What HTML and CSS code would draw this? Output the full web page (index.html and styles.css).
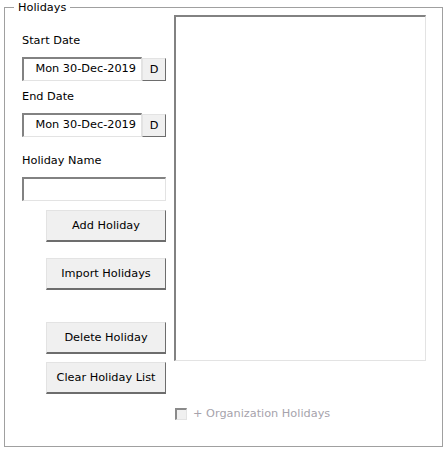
FILE: index.html
```html
<!DOCTYPE html>
<html>
<head>
<meta charset="utf-8">
<link rel="stylesheet" href="styles.css">
</head>
<body>
<fieldset class="group">
  <legend class="group-title">Holidays</legend>
  <div class="group-body">
    <div class="left-col">
      <div class="lbl lbl-start">Start Date</div>
      <div class="date-row">
        <div class="date-field">Mon 30-Dec-2019</div>
        <button class="d-btn">D</button>
      </div>
      <div class="lbl lbl-end">End Date</div>
      <div class="date-row">
        <div class="date-field">Mon 30-Dec-2019</div>
        <button class="d-btn">D</button>
      </div>
      <div class="lbl lbl-name">Holiday Name</div>
      <div class="text-field"></div>
      <button class="btn btn-add">Add Holiday</button>
      <button class="btn btn-import">Import Holidays</button>
      <button class="btn btn-delete">Delete Holiday</button>
      <button class="btn btn-clear">Clear Holiday List</button>
    </div>
    <div class="right-col">
      <div class="listbox"></div>
      <div class="chk">
        <span class="chk-box"></span>
        <span class="chk-text">+ Organization Holidays</span>
      </div>
    </div>
  </div>
</fieldset>
</body>
</html>
```
FILE: styles.css
```css
html, body {
  margin: 0;
  padding: 0;
  background: #ffffff;
}
body {
  font-family: "DejaVu Sans", Verdana, sans-serif;
  font-size: 11.3px;
  color: #000;
  width: 446px;
  height: 451px;
  overflow: hidden;
}
.group {
  box-sizing: border-box;
  margin: 0 0 0 4px;
  padding: 0;
  width: 439px;
  height: 447px;
  border: 1px solid #a0a0a0;
  min-width: 0;
}
.group-title {
  margin-left: 9px;
  padding: 0 4px;
  height: 15px;
  line-height: 16px;
  font-size: 11.3px;
}
.group-body {
  display: flex;
  padding-left: 17px;
}
.left-col {
  width: 144px;
  display: flex;
  flex-direction: column;
  align-items: flex-start;
}
.lbl {
  height: 14px;
  line-height: 16px;
}
.lbl-start { margin-top: 18px; }
.lbl-end { margin-top: 8px; }
.lbl-name { margin-top: 16px; }
.date-row {
  display: flex;
  align-items: flex-start;
  margin-top: 10px;
  height: 24px;
}
.date-field {
  box-sizing: border-box;
  width: 120px;
  height: 24px;
  border-style: solid;
  border-width: 2px 1px 1px 2px;
  border-color: #828282 #e3e3e3 #e3e3e3 #828282;
  text-align: right;
  padding-right: 5px;
  line-height: 20px;
}
.d-btn {
  box-sizing: border-box;
  margin: 1px 0 0 0;
  width: 24px;
  height: 23px;
  padding: 0;
  font: inherit;
  color: #000;
  background: #f0f0f0;
  border-style: solid;
  border-width: 1px;
  border-color: #e3e3e3 #6d6d6d #6d6d6d #e3e3e3;
  line-height: 20px;
  padding-top: 1px;
}
.text-field {
  box-sizing: border-box;
  margin-top: 10px;
  width: 144px;
  height: 24px;
  border-style: solid;
  border-width: 2px 1px 1px 2px;
  border-color: #828282 #e3e3e3 #e3e3e3 #828282;
}
.btn {
  box-sizing: border-box;
  margin-left: 24px;
  width: 120px;
  height: 32px;
  padding: 0;
  font: inherit;
  color: #000;
  background: #f0f0f0;
  border-style: solid;
  border-width: 1px 1px 2px 1px;
  border-color: #e3e3e3 #6d6d6d #6d6d6d #e3e3e3;
}
.btn-add { margin-top: 9px; }
.btn-import { margin-top: 16px; }
.btn-delete { margin-top: 32px; }
.btn-clear { margin-top: 8px; }
.right-col {
  margin-left: 8px;
  display: flex;
  flex-direction: column;
}
.listbox {
  box-sizing: border-box;
  width: 252px;
  height: 346px;
  border-style: solid;
  border-width: 2px 1px 1px 2px;
  border-color: #828282 #e3e3e3 #e3e3e3 #828282;
  background: #fff;
}
.chk {
  display: flex;
  align-items: center;
  margin-top: 46px;
  margin-left: 1px;
  height: 14px;
}
.chk-box {
  box-sizing: border-box;
  width: 12px;
  height: 12px;
  border-style: solid;
  border-width: 2px 1px 1px 2px;
  border-color: #8a8a8a #e3e3e3 #e3e3e3 #8a8a8a;
  background: #f0f0f0;
}
.chk-text {
  margin-left: 6px;
  color: #a6a3ac;
  line-height: 14px;
}
```
